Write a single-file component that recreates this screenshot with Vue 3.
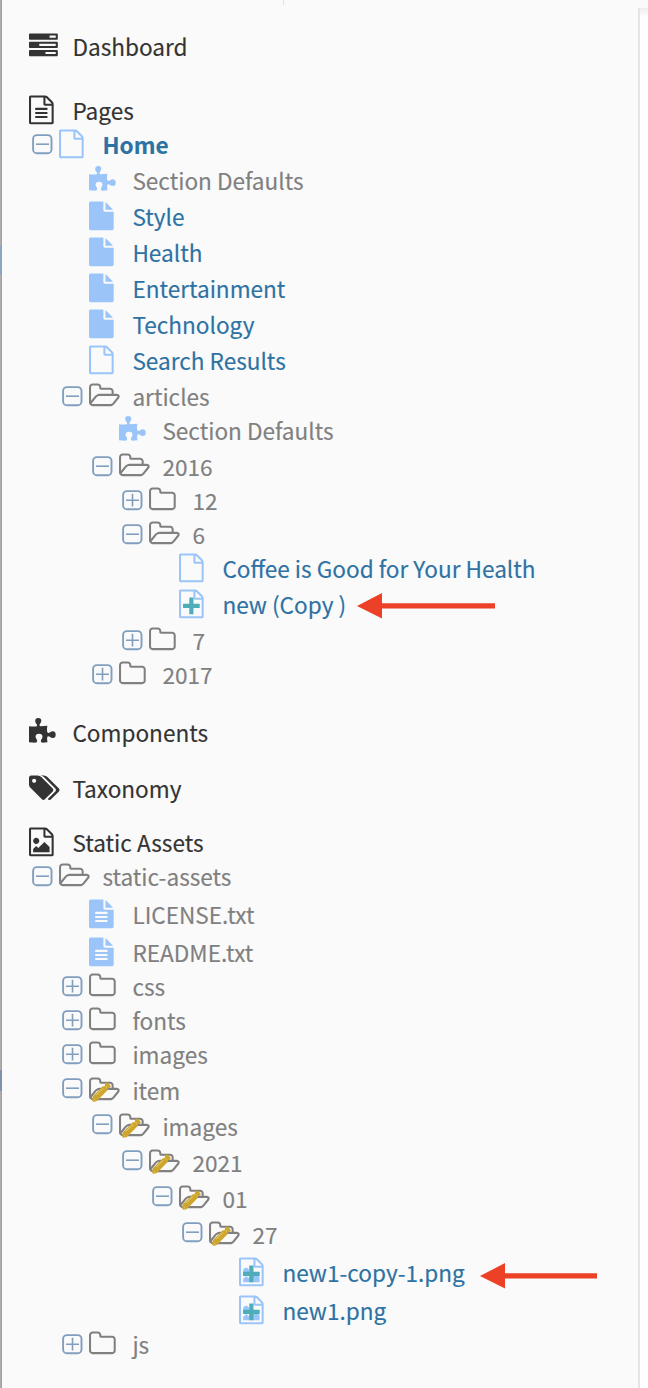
<script setup>
// [baseline y, depth (-1 = section heading), toggle, icon, tone, label]
const source = [
  [56, -1, '', 'tasks', 'dark', 'Dashboard'],
  [120, -1, '', 'fileText', 'dark', 'Pages'],
  [154, 0, 'minus', 'file', 'link strong', 'Home'],
  [190, 1, '', 'puzzle', 'muted', 'Section Defaults'],
  [226, 1, '', 'solid', 'link', 'Style'],
  [262, 1, '', 'solid', 'link', 'Health'],
  [298, 1, '', 'solid', 'link', 'Entertainment'],
  [334, 1, '', 'solid', 'link', 'Technology'],
  [370, 1, '', 'file', 'link', 'Search Results'],
  [406, 1, 'minus', 'open', 'muted', 'articles'],
  [440, 2, '', 'puzzle', 'muted', 'Section Defaults'],
  [476, 2, 'minus', 'open', 'muted', '2016'],
  [510, 3, 'plus', 'folder', 'muted', '12'],
  [544, 3, 'minus', 'open', 'muted', '6'],
  [578, 4, '', 'file', 'link', 'Coffee is Good for Your Health'],
  [614, 4, '', 'fileNew', 'link', 'new (Copy )'],
  [650, 3, 'plus', 'folder', 'muted', '7'],
  [684, 2, 'plus', 'folder', 'muted', '2017'],
  [742, -1, '', 'puzzle', 'dark', 'Components'],
  [798, -1, '', 'tags', 'dark', 'Taxonomy'],
  [852, -1, '', 'image', 'dark', 'Static Assets'],
  [886, 0, 'minus', 'open', 'muted', 'static-assets'],
  [924, 1, '', 'solidText', 'muted', 'LICENSE.txt'],
  [962, 1, '', 'solidText', 'muted', 'README.txt'],
  [996, 1, 'plus', 'folder', 'muted', 'css'],
  [1030, 1, 'plus', 'folder', 'muted', 'fonts'],
  [1064, 1, 'plus', 'folder', 'muted', 'images'],
  [1100, 1, 'minus', 'openEdit', 'muted', 'item'],
  [1136, 2, 'minus', 'openEdit', 'muted', 'images'],
  [1172, 3, 'minus', 'openEdit', 'muted', '2021'],
  [1208, 4, 'minus', 'openEdit', 'muted', '01'],
  [1244, 5, 'minus', 'openEdit', 'muted', '27'],
  [1282, 6, '', 'imageNew', 'link', 'new1-copy-1.png'],
  [1320, 6, '', 'imageNew', 'link', 'new1.png'],
  [1354, 1, 'plus', 'folder', 'muted', 'js'],
]
const rows = source.map(([y, depth, toggle, icon, tone, label], i) => ({
  depth, toggle, icon, tone, label,
  height: (source[i + 1]?.[0] ?? y + 34) - y,
}))

const fileO = 'M1468 380q28 28 48 76t20 88v1152q0 40-28 68t-68 28H96q-40 0-68-28t-28-68V96q0-40 28-68T96 0h896q40 0 88 20t76 48zm-444-244v376h376q-10-29-22-41l-313-313q-12-12-41-22zm384 1528V640H992q-40 0-68-28t-28-68V128H128v1536h1280z'
const solid = 'M1024 512V40q22 14 36 28l408 408q14 14 28 36h-472zm-128 32q0 40 28 68t68 28h544v1056q0 40-28 68t-68 28H96q-40 0-68-28t-28-68V96q0-40 28-68T96 0h800v544z'
const image = 'M1280 1216v320H256v-192l192-192 128 128 384-384zM448 1024q-80 0-136-56t-56-136 56-136 136-56 136 56 56 136-56 136-136 56z'
const open = 'M1781 931q0-35-53-35H640q-40 0-85.5 21.5T483 969l-294 363q-18 24-18 40 0 35 53 35h1088q40 0 86-22t71-53l294-363q18-22 18-39zM640 768h768V608q0-40-28-68t-68-28H736q-40 0-68-28t-28-68v-64q0-40-28-68t-68-28H224q-40 0-68 28t-28 68v853l256-315q44-53 116-87.5T640 768zm1269 163q0 62-46 120l-295 363q-43 53-116 87.5t-140 34.5H224q-92 0-158-66T0 1312V352q0-92 66-158t158-66h320q92 0 158 66t66 158v32h544q92 0 158 66t66 158v160h192q54 0 99 24.5t67 70.5q15 32 15 68z'
const folder = 'M1536 1312V608q0-40-28-68t-68-28H736q-40 0-68-28t-28-68v-64q0-40-28-68t-68-28H224q-40 0-68 28t-28 68v960q0 40 28 68t68 28h1216q40 0 68-28t28-68zm128-704v704q0 92-66 158t-158 66H224q-92 0-158-66T0 1312V352q0-92 66-158t158-66h320q92 0 158 66t66 158v32h672q92 0 158 66t66 158z'
const tags = 'M448 448q0-53-37.5-90.5T320 320t-90.5 37.5T192 448t37.5 90.5T320 576t90.5-37.5T448 448zm1067 576q0 53-37 90l-491 492q-39 37-91 37-53 0-90-37L91 890Q53 853 26.5 789T0 672V256q0-52 38-90t90-38h416q53 0 117 26.5T763 217l715 714q37 39 37 93zm384 0q0 53-37 90l-491 492q-39 37-91 37-36 0-59-14t-53-45l470-470q37-37 37-90 0-52-37-91L923 217q-38-36-102-62.5T704 128h224q53 0 117 26.5T1147 217l715 714q37 39 37 93z'
const tasks = 'M1024 1408h640v-128h-640zM640 896h1024V768H640zM1280 384h384V256h-384zM1792 1216v256q0 26-19 45t-45 19H64q-26 0-45-19t-19-45v-256q0-26 19-45t45-19h1664q26 0 45 19t19 45zM1792 704v256q0 26-19 45t-45 19H64q-26 0-45-19t-19-45V704q0-26 19-45t45-19h1664q26 0 45 19t19 45zM1792 192v256q0 26-19 45t-45 19H64q-26 0-45-19t-19-45V192q0-26 19-45t45-19h1664q26 0 45 19t19 45z'
const puzzle = 'M0 540Q220 575 400 560Q505 550 505 500Q505 440 440 370Q385 300 385 215Q385 30 575 30Q765 30 765 205Q765 290 705 365Q650 430 655 500Q660 545 730 545Q900 545 1140 515Q1110 700 1125 860Q1135 970 1210 970Q1260 970 1315 920Q1390 860 1470 860Q1660 860 1660 1070Q1660 1275 1480 1275Q1390 1275 1310 1210Q1260 1170 1210 1170Q1120 1170 1125 1290Q1125 1400 1150 1535Q980 1565 860 1565Q735 1565 735 1475Q735 1410 790 1345Q840 1280 840 1190Q840 1010 625 1010Q410 1010 410 1180Q410 1270 465 1345Q510 1405 510 1465Q510 1565 370 1565Q220 1565 0 1535Z'
const lines = 'M384 800q0-32 32-32h704q32 0 32 32v64q0 32-32 32H416q-32 0-32-32zM384 1056q0-32 32-32h704q32 0 32 32v64q0 32-32 32H416q-32 0-32-32zM384 1312q0-32 32-32h704q32 0 32 32v64q0 32-32 32H416q-32 0-32-32z'
const paths = {
  file: fileO, fileNew: fileO, fileText: fileO + lines, solid, solidText: solid + lines,
  image: fileO + image, imageNew: fileO + image, open, openEdit: open, folder, tags, tasks, puzzle,
}
</script>

<template>
  <main class="page">
    <span class="edge"></span>
    <span class="notch"></span>
    <nav class="tree">
      <div
        v-for="(row, i) in rows"
        :key="i"
        class="row"
        :class="row.tone"
        :style="{ height: row.height + 'px', paddingLeft: (row.depth < 0 ? 29 : 32 + row.depth * 30) + 'px' }"
      >
        <span v-if="row.depth >= 0" class="toggle-slot" :class="{ raised: row.icon === 'openEdit' }">
          <svg v-if="row.toggle" class="toggle" viewBox="0 0 21 21">
            <rect x="1.1" y="1.1" width="18.4" height="18.2" rx="3.8" />
            <path :d="row.toggle === 'plus' ? 'M4 10.2H17M10.5 3.8V16.6' : 'M4 10.2H17'" />
          </svg>
        </span>
        <svg class="icon" :class="row.icon" viewBox="0 0 1991 1867">
          <path :d="paths[row.icon]" fill="currentColor" fill-rule="evenodd" />
          <path v-if="row.icon.endsWith('New')" class="added" d="M640 500h260v390h390v260H900v390H640v-390H250V890h390z" />
          <g v-if="row.icon === 'openEdit'" class="pencil">
            <path d="M190 1540L240 1290L860 670L940 670L1000 610L990 530L1080 440L1180 460L1330 610L1350 700L1270 780L1200 775L1150 830L1150 920L520 1550L430 1620L250 1640Z" />
            <path class="shine" d="M450 1220L860 810M310 1490l50 40" />
            <path class="shine thin" d="M980 630L1170 820" />
          </g>
        </svg>
        <span class="label">{{ row.label }}</span>
      </div>
    </nav>
    <aside class="content"></aside>
    <svg class="arrow first" viewBox="0 0 138 26"><path d="M0 13L25 0V10.2H138V15.6H25V25.5Z" /></svg>
    <svg class="arrow second" viewBox="0 0 117 26"><path d="M0 13L25 0V10.2H117V15.6H25V25.5Z" /></svg>
  </main>
</template>

<style>
body { background: #fafafa; }
</style>

<style scoped>
.page {
  position: relative;
  display: flex;
  height: 1388px;
  overflow: hidden;
  background: #fafafa;
  font-family: "Noto Sans CJK SC", "Noto Sans", sans-serif;
}
.edge {
  position: absolute;
  inset: 0 auto 0 0;
  width: 2px;
  background:
    linear-gradient(#8ba3c4, #8ba3c4) 0 246px / 2px 28px no-repeat,
    linear-gradient(#8092a8, #8092a8) 0 1070px / 2px 21px no-repeat,
    linear-gradient(90deg, #b4b4b4, #9a9a9a);
}
.notch { position: absolute; left: 283px; top: 0; width: 1px; height: 5px; background: #e2e2e2; }
.tree { width: 638px; flex: none; padding-top: 29px; box-sizing: border-box; }
.row { display: flex; align-items: flex-start; box-sizing: border-box; }
.toggle-slot { flex: none; width: 27px; padding-top: 7px; }
.toggle-slot.raised { padding-top: 5px; }
.toggle { display: block; width: 21px; height: 21px; fill: none; stroke: #819ebf; stroke-width: 1.9; }
.toggle path { stroke-width: 1.6; }
.icon { flex: none; display: block; width: 32px; height: 30px; padding-top: 0.5px; margin-top: 2px; margin-right: 11.4px; overflow: visible; color: #9bc5f9; }
.icon.open, .icon.openEdit, .icon.folder { color: #808080; }
.dark .icon { color: #333; }
.added { fill: #4eadb9; }
.pencil { fill: #cfa62c; }
.shine { fill: none; stroke: #eedc9e; stroke-width: 50; }
.shine.thin { stroke-width: 30; }
.label { white-space: pre; font-size: 22.6px; line-height: 36px; margin-top: -0.5px; -webkit-text-stroke: 0.15px currentColor; }
.dark .label { color: #333; }
.link .label { color: #2d72a3; }
.muted .label { color: #808080; }
.strong .label { font-weight: 700; }
.content { flex: 1; margin-top: 8px; border-left: 2px solid #e5e5e5; background: linear-gradient(#ededed, #fff 9px); }
.arrow { position: absolute; height: 26px; fill: #ec4127; }
.first { left: 357px; top: 593px; width: 138px; }
.second { left: 480px; top: 1263px; width: 117px; }
</style>
